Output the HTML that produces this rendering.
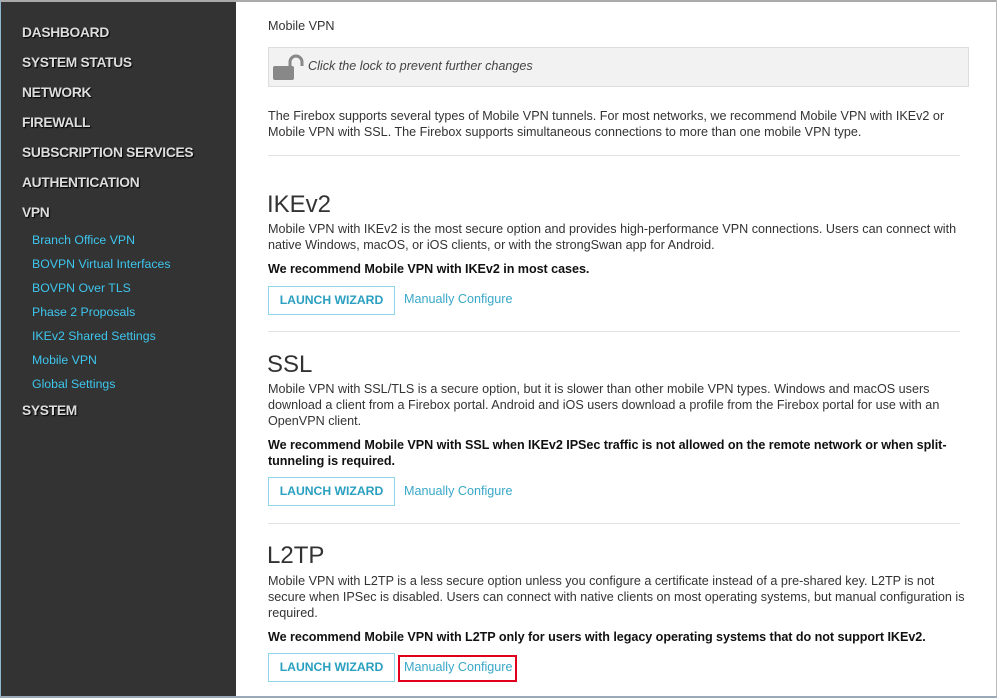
<!DOCTYPE html>
<html><head><meta charset="utf-8"><style>
*{margin:0;padding:0;box-sizing:border-box}
body{width:997px;height:698px;position:relative;overflow:hidden;background:#fff;font-family:"Liberation Sans",Arial,sans-serif;color:#333}
#side{position:absolute;left:0;top:0;width:236px;height:696px;background:#333;border-left:1px solid #8fb8d0;border-top:2px solid #aaa}
.t{position:absolute;white-space:nowrap;line-height:16px}
.h{left:22px;font-weight:bold;font-size:13.8px;letter-spacing:-0.3px;color:#ddd;text-shadow:1px 1px 1px #000}
.s{left:32px;font-size:12.3px;color:#3ec6ee}
.p{left:268px;font-size:12.6px;letter-spacing:0;color:#333}
.b{font-weight:bold;color:#111;letter-spacing:-0.05px}
.hd{left:267px;font-size:24px;line-height:28px;color:#333;font-weight:300}
.sep{position:absolute;left:268px;width:692px;height:1px;background:#e3e3e3}
.btn{position:absolute;left:268px;width:127px;height:29px;border:1px solid #8fd6ea;color:#2a9fc0;font-weight:bold;font-size:12.2px;text-align:center;line-height:27px}
.lk{left:404px;font-size:12.6px;color:#3aa8c8}
</style></head><body>
<div style="position:absolute;left:0;top:0;width:997px;height:2px;background:#aaa"></div>
<div style="position:absolute;right:0;top:0;width:1px;height:698px;background:#bbb"></div>
<div style="position:absolute;left:0;bottom:0;width:997px;height:2px;background:#9aaab8"></div>
<div id="side"></div>
<div class="t h" style="top:25px">DASHBOARD</div>
<div class="t h" style="top:55px">SYSTEM STATUS</div>
<div class="t h" style="top:85px">NETWORK</div>
<div class="t h" style="top:115px">FIREWALL</div>
<div class="t h" style="top:145px">SUBSCRIPTION SERVICES</div>
<div class="t h" style="top:175px">AUTHENTICATION</div>
<div class="t h" style="top:205px">VPN</div>
<div class="t s" style="top:232px">Branch Office VPN</div>
<div class="t s" style="top:256px">BOVPN Virtual Interfaces</div>
<div class="t s" style="top:280px">BOVPN Over TLS</div>
<div class="t s" style="top:304px">Phase 2 Proposals</div>
<div class="t s" style="top:328px">IKEv2 Shared Settings</div>
<div class="t s" style="top:352px">Mobile VPN</div>
<div class="t s" style="top:376px">Global Settings</div>
<div class="t h" style="top:403px">SYSTEM</div>

<div class="t p" style="top:18px">Mobile VPN</div>
<div style="position:absolute;left:268px;top:47px;width:701px;height:40px;background:#f2f2f2;border:1px solid #ddd"></div>
<svg style="position:absolute;left:272px;top:53px" width="32" height="30" viewBox="0 0 32 30"><path d="M18 14 V9 a6 6 0 0 1 12 0 V13" fill="none" stroke="#888" stroke-width="3"/><rect x="1" y="13" width="21" height="14" rx="2" fill="#888"/></svg>
<div class="t p" style="top:58px;left:308px;font-style:italic;color:#444">Click the lock to prevent further changes</div>
<div class="t p" style="top:108px">The Firebox supports several types of Mobile VPN tunnels. For most networks, we recommend Mobile VPN with IKEv2 or</div>
<div class="t p" style="top:124px">Mobile VPN with SSL. The Firebox supports simultaneous connections to more than one mobile VPN type.</div>
<div class="sep" style="top:155px"></div>

<div class="t hd" style="top:191px">IKEv2</div>
<div class="t p" style="top:221px">Mobile VPN with IKEv2 is the most secure option and provides high-performance VPN connections. Users can connect with</div>
<div class="t p" style="top:237px">native Windows, macOS, or iOS clients, or with the strongSwan app for Android.</div>
<div class="t p b" style="top:261px">We recommend Mobile VPN with IKEv2 in most cases.</div>
<div class="btn" style="top:286px">LAUNCH WIZARD</div>
<div class="t lk" style="top:291px">Manually Configure</div>
<div class="sep" style="top:331px"></div>

<div class="t hd" style="top:351px">SSL</div>
<div class="t p" style="top:381px">Mobile VPN with SSL/TLS is a secure option, but it is slower than other mobile VPN types. Windows and macOS users</div>
<div class="t p" style="top:397px">download a client from a Firebox portal. Android and iOS users download a profile from the Firebox portal for use with an</div>
<div class="t p" style="top:413px">OpenVPN client.</div>
<div class="t p b" style="top:437px">We recommend Mobile VPN with SSL when IKEv2 IPSec traffic is not allowed on the remote network or when split-</div>
<div class="t p b" style="top:453px">tunneling is required.</div>
<div class="btn" style="top:477px">LAUNCH WIZARD</div>
<div class="t lk" style="top:483px">Manually Configure</div>
<div class="sep" style="top:523px"></div>

<div class="t hd" style="top:542px">L2TP</div>
<div class="t p" style="top:573px">Mobile VPN with L2TP is a less secure option unless you configure a certificate instead of a pre-shared key. L2TP is not</div>
<div class="t p" style="top:589px">secure when IPSec is disabled. Users can connect with native clients on most operating systems, but manual configuration is</div>
<div class="t p" style="top:605px">required.</div>
<div class="t p b" style="top:629px">We recommend Mobile VPN with L2TP only for users with legacy operating systems that do not support IKEv2.</div>
<div class="btn" style="top:653px">LAUNCH WIZARD</div>
<div class="t lk" style="top:659px">Manually Configure</div>
<div style="position:absolute;left:398px;top:655px;width:119px;height:27px;border:2px solid #e0001b"></div>
</body></html>
